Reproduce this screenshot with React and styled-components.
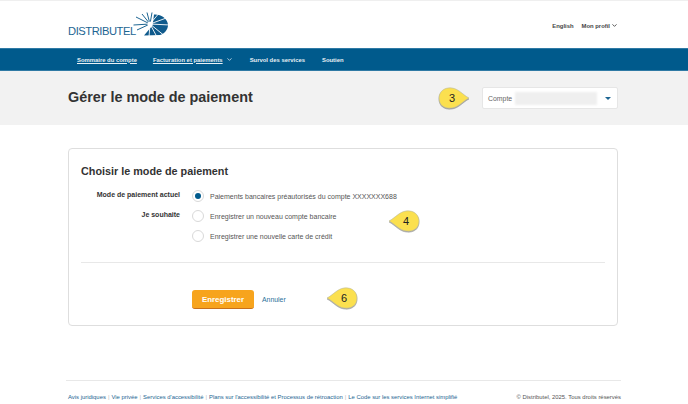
import React from "react";
import styled, { createGlobalStyle } from "styled-components";
import { ChevronDown } from "lucide-react";

const Global = createGlobalStyle`
  html, body {
    margin: 0;
    padding: 0;
    background: #fff;
    font-family: "Liberation Sans", Arial, sans-serif;
  }
`;

const Page = styled.div`
  width: 688px;
  height: 404px;
  overflow: hidden;
  position: relative;
`;

const Header = styled.header`
  height: 47px;
  border-top: 1px solid #efefef;
  display: flex;
  align-items: center;
  justify-content: space-between;
  padding: 0 70px 0 68px;
`;

const Logo = styled.div`
  display: flex;
  align-items: flex-end;
  height: 26px;
  margin-top: -2px;
`;

const LogoText = styled.span`
  width: 65px;
  font-size: 11.2px;
  line-height: 12px;
  color: #1d6592;
  letter-spacing: -0.45px;
  white-space: nowrap;
`;

const Sun = styled.svg`
  width: 38px;
  height: 26px;
  margin-bottom: 0;
`;

const TopLinks = styled.div`
  display: flex;
  align-items: center;
  gap: 8px;
  font-size: 5.9px;
  font-weight: bold;
  color: #444;
  margin-top: 2px;
`;

const TopLink = styled.span`
  display: flex;
  align-items: center;
  gap: 1px;
`;

const Nav = styled.nav`
  height: 21px;
  background: #005a8c;
  border-top: 1px solid #2f7aa5;
  border-bottom: 1px solid #2f7aa5;
  display: flex;
  align-items: center;
  padding-left: 77px;
  font-size: 5.9px;
  font-weight: bold;
  color: #e8f0f5;
`;

const NavItem = styled.span`
  display: flex;
  align-items: center;
  gap: 3px;
  margin-right: ${(p) => p.$gap}px;
  text-decoration: ${(p) => (p.$line ? "underline" : "none")};
`;

const TitleBand = styled.div`
  height: 54px;
  background: #f2f2f2;
  display: flex;
  align-items: center;
  justify-content: space-between;
  padding: 0 70px 0 68px;
`;

const Title = styled.h1`
  margin: 0 0 3px;
  font-size: 14.4px;
  font-weight: bold;
  color: #333;
`;

const AccountSelect = styled.div`
  box-sizing: border-box;
  width: 136px;
  height: 22px;
  background: #fff;
  border: 1px solid #e6e6e6;
  border-radius: 2px;
  display: flex;
  align-items: center;
  padding-left: 5px;
  font-size: 6.9px;
  color: #666;
`;

const Blurred = styled.div`
  width: 82px;
  height: 13px;
  margin-left: 3px;
  background: #efefef;
  filter: blur(1px);
`;

const Caret = styled.div`
  width: 0;
  height: 0;
  border-left: 3px solid transparent;
  border-right: 3px solid transparent;
  border-top: 3px solid #1d6592;
  margin-left: 8px;
`;

const Card = styled.section`
  box-sizing: border-box;
  width: 550px;
  height: 178px;
  margin: 23px 0 0 68px;
  border: 1px solid #dedede;
  border-radius: 4px;
  padding: 15px 12px 0;
`;

const CardTitle = styled.h2`
  margin: 0 0 7px;
  font-size: 10.8px;
  line-height: 15px;
  font-weight: bold;
  color: #333;
`;

const Row = styled.div`
  display: grid;
  grid-template-columns: 99px 1fr;
  column-gap: 12px;
  height: 20px;
  align-items: center;
`;

const RowLabel = styled.span`
  font-size: 7px;
  font-weight: bold;
  color: #333;
  text-align: right;
  margin-top: -3px;
`;

const Option = styled.label`
  display: flex;
  align-items: center;
  gap: 6px;
  font-size: 7px;
  color: #555;
`;

const Radio = styled.span`
  box-sizing: border-box;
  width: 12px;
  height: 12px;
  border-radius: 50%;
  border: 1px solid #d9d9d9;
  background: #fff;
  display: flex;
  align-items: center;
  justify-content: center;

  &::after {
    content: "";
    width: 6px;
    height: 6px;
    border-radius: 50%;
    background: ${(p) => (p.$checked ? "#005a8c" : "transparent")};
  }
`;

const Divider = styled.hr`
  margin: 16px 0 0;
  border: 0;
  border-top: 1px solid #e8e8e8;
`;

const Actions = styled.div`
  display: flex;
  align-items: center;
  gap: 8px;
  margin: 27px 0 0 111px;
`;

const SaveButton = styled.button`
  width: 62px;
  height: 19px;
  padding: 0;
  border: 0;
  border-bottom: 1px solid #c9701a;
  border-radius: 3px;
  background: #f7a41d;
  color: #fff;
  font: bold 7.9px "Liberation Sans", Arial, sans-serif;
`;

const CancelLink = styled.a`
  font-size: 6.9px;
  color: #2a6f99;
`;

const Footer = styled.footer`
  position: absolute;
  left: 66px;
  top: 380px;
  width: 555px;
  border-top: 1px solid #e8e8e8;
  padding: 12px 0 0 2px;
  box-sizing: border-box;
  display: flex;
  justify-content: space-between;
  font-size: 5.9px;
  line-height: 8px;
  white-space: nowrap;
`;

const FooterLinks = styled.div`
  color: #1d6592;
`;

const Sep = styled.span`
  color: #bbb;
  margin: 0 2px;
`;

const Copy = styled.span`
  color: #555;
`;

const Bubble = styled.svg`
  position: absolute;
  left: ${(p) => p.$x}px;
  top: ${(p) => p.$y}px;
  width: 36px;
  height: 26px;
`;

function Callout({ x, y, n, left }) {
  return (
    <Bubble $x={x} $y={y} viewBox="0 0 36 26">
      <path
        d={
          left
            ? "M2 12 C8 9 12 3 19 2 C27 1 32 6 32 12 C32 19 27 23 19 22 C12 21 8 15 2 12 Z"
            : "M33 12 C27 9 23 3 16 2 C8 1 3 6 3 12 C3 19 8 23 16 22 C23 21 27 15 33 12 Z"
        }
        fill="#fbe04f"
        stroke="#b9b9a0"
        strokeWidth="0.6"
        style={{ filter: "drop-shadow(0.5px 1px 0.6px rgba(0,0,0,.35))" }}
      />
      <text
        x={left ? 19 : 16}
        y="16"
        textAnchor="middle"
        fontSize="11"
        fontFamily="Liberation Sans, Arial, sans-serif"
        fill="#222"
      >
        {n}
      </text>
    </Bubble>
  );
}

// burst centre at (17, 13)
const rayEnds = [
  [0.5, 14],
  [3, 6],
  [9, 3],
  [14, 1.5],
  [19, 1.5],
  [4, 19],
];

function SunMark() {
  return (
    <Sun viewBox="0 0 38 26">
      {rayEnds.map(([x, y], i) => (
        <line key={i} x1="17" y1="13" x2={x} y2={y} stroke="#1d6592" strokeWidth="1" />
      ))}
      <path d="M21 3.5 C28 3 35 8 35 14 C35 19 31 23 27 24 L11 24.5 L19 15 L20 11 Z" fill="#0f5a8c" />
      <g stroke="#fff" strokeWidth="0.9">
        <line x1="17" y1="13" x2="27" y2="1" />
        <line x1="17" y1="13" x2="36" y2="6" />
        <line x1="17" y1="13" x2="37" y2="14" />
        <line x1="17" y1="13" x2="33" y2="26" />
        <line x1="17" y1="13" x2="24" y2="26" />
        <line x1="17" y1="13" x2="16" y2="26" />
      </g>
      <circle cx="17" cy="13" r="2.6" fill="#fff" />
    </Sun>
  );
}

export default function App() {
  return (
    <Page>
      <Global />
      <Header>
        <Logo>
          <LogoText>DISTRIBUTEL</LogoText>
          <SunMark />
        </Logo>
        <TopLinks>
          <TopLink>English</TopLink>
          <TopLink>
            Mon profil <ChevronDown size={7} strokeWidth={3} />
          </TopLink>
        </TopLinks>
      </Header>
      <Nav>
        <NavItem $line $gap={16}>Sommaire du compte</NavItem>
        <NavItem $gap={17}>
          <u>Facturation et paiements </u>
          <ChevronDown size={7} strokeWidth={2.5} />
        </NavItem>
        <NavItem $gap={17}>Survol des services</NavItem>
        <NavItem $gap={0}>Soutien</NavItem>
      </Nav>
      <TitleBand>
        <Title>Gérer le mode de paiement</Title>
        <AccountSelect>
          Compte
          <Blurred />
          <Caret />
        </AccountSelect>
      </TitleBand>
      <Card>
        <CardTitle>Choisir le mode de paiement</CardTitle>
        <Row>
          <RowLabel>Mode de paiement actuel</RowLabel>
          <Option>
            <Radio $checked />
            Paiements bancaires préautorisés du compte XXXXXXX688
          </Option>
        </Row>
        <Row>
          <RowLabel>Je souhaite</RowLabel>
          <Option>
            <Radio />
            Enregistrer un nouveau compte bancaire
          </Option>
        </Row>
        <Row>
          <span />
          <Option>
            <Radio />
            Enregistrer une nouvelle carte de crédit
          </Option>
        </Row>
        <Divider />
        <Actions>
          <SaveButton>Enregistrer</SaveButton>
          <CancelLink>Annuler</CancelLink>
        </Actions>
      </Card>
      <Footer>
        <FooterLinks>
          Avis juridiques<Sep>|</Sep>Vie privée<Sep>|</Sep>Services d'accessibilité<Sep>|</Sep>
          Plans sur l'accessibilité et Processus de rétroaction<Sep>|</Sep>Le Code sur les services Internet simplifié
        </FooterLinks>
        <Copy>© Distributel, 2025. Tous droits réservés</Copy>
      </Footer>
      <Callout x={436} y={86} n="3" />
      <Callout x={387} y={209} n="4" left />
      <Callout x={325} y={286} n="6" left />
    </Page>
  );
}
